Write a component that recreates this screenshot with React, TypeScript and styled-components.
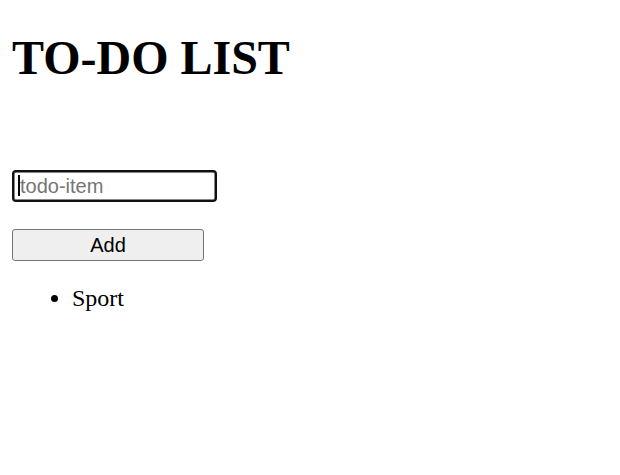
import React from "react";
import styled, { createGlobalStyle } from "styled-components";

const Global = createGlobalStyle`
  html, body { margin: 0; padding: 0; background: #fff; }
  body { font-family: "Liberation Serif", "Times New Roman", serif; font-size: 24px; color: #000; }
`;

const Page = styled.div`
  padding: 0 12px;
`;

const Title = styled.h1`
  font-size: 48px;
  font-weight: bold;
  line-height: 55px;
  margin: 30px 0 0;
`;

const Form = styled.form`
  display: flex;
  flex-direction: column;
  align-items: flex-start;
  gap: 27px;
  margin-top: 85px;
`;

const Field = styled.span`
  position: relative;
  display: inline-block;
`;

const Input = styled.input`
  box-sizing: border-box;
  width: 205px;
  height: 32px;
  padding: 0 5px 0 6px;
  border: 2px solid #101010;
  border-radius: 4px;
  box-shadow: inset 0 0 0 0.5px #101010;
  font-family: "Liberation Sans", Arial, sans-serif;
  font-size: 20px;
  color: #000;
  outline: none;
  caret-color: transparent;
  &::placeholder { color: #757575; }
`;

const Caret = styled.span`
  position: absolute;
  left: 6px;
  top: 5px;
  width: 2px;
  height: 21px;
  background: #000;
  pointer-events: none;
`;

const Button = styled.button`
  box-sizing: border-box;
  width: 192px;
  height: 32px;
  background: #efefef;
  border: 1px solid #767676;
  border-radius: 3px;
  font-family: "Liberation Sans", Arial, sans-serif;
  font-size: 20px;
  color: #000;
  padding: 0;
`;

const List = styled.ul`
  margin: 25px 0 0;
  padding-left: 60px;
  list-style: disc;
`;

const Item = styled.li`
  font-size: 24px;
  line-height: 25px;
`;

export default function App() {
  return (
    <>
      <Global />
      <Page>
        <Title>TO-DO LIST</Title>
        <Form onSubmit={(e) => e.preventDefault()}>
          <Field>
            <Input placeholder="todo-item" autoFocus />
            <Caret />
          </Field>
          <Button type="submit">Add</Button>
        </Form>
        <List>
          <Item>Sport</Item>
        </List>
      </Page>
    </>
  );
}
